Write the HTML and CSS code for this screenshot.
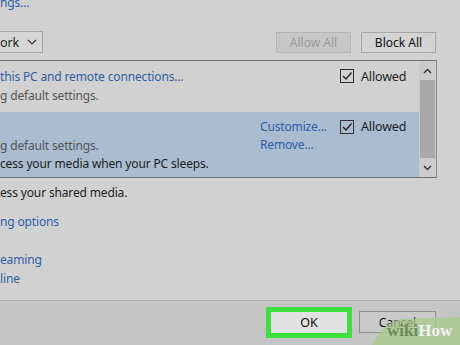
FILE: index.html
```html
<!DOCTYPE html>
<html lang="en">
<head>
    <meta charset="UTF-8">
    <title>Media streaming options</title>
    <link rel="stylesheet" href="styles.css">
</head>
<body>
    <div class="dialog">
        <a class="link top-link" href="#">ngs...</a>

        <div class="toolbar">
            <div class="dropdown">
                <span>ork</span>
                <svg class="chev" width="10" height="6" viewBox="0 0 10 6"><path d="M1 1 L5 5 L9 1" fill="none" stroke="#333" stroke-width="1.2"/></svg>
            </div>
            <div class="tool-buttons">
                <button class="btn disabled">Allow All</button>
                <button class="btn">Block All</button>
            </div>
        </div>

        <!-- device list -->
        <div class="list">
            <div class="rows">
                <div class="row">
                    <div class="col-name">
                        <a class="link" href="#">this PC and remote connections...</a>
                        <div class="muted">g default settings.</div>
                    </div>
                    <div class="col-links"></div>
                    <label class="col-check">
                        <svg class="check" width="14" height="14" viewBox="0 0 14 14"><rect x="0.5" y="0.5" width="13" height="13" fill="none" stroke="#333"/><path d="M3 7 L6 10 L11.5 3.5" fill="none" stroke="#222" stroke-width="1.3"/></svg>
                        Allowed
                    </label>
                </div>
                <div class="row selected">
                    <div class="col-name">
                        <div>&nbsp;</div>
                        <div class="muted">g default settings.</div>
                        <div>cess your media when your PC sleeps.</div>
                    </div>
                    <div class="col-links">
                        <a class="link" href="#">Customize...</a>
                        <a class="link" href="#">Remove...</a>
                    </div>
                    <label class="col-check">
                        <svg class="check" width="14" height="14" viewBox="0 0 14 14"><rect x="0.5" y="0.5" width="13" height="13" fill="none" stroke="#333"/><path d="M3 7 L6 10 L11.5 3.5" fill="none" stroke="#222" stroke-width="1.3"/></svg>
                        Allowed
                    </label>
                </div>
            </div>
            <div class="scrollbar">
                <svg class="arrow" width="9" height="6" viewBox="0 0 9 6"><path d="M1 5 L4.5 1.5 L8 5" fill="none" stroke="#333" stroke-width="1.4"/></svg>
                <div class="thumb"></div>
                <svg class="arrow" width="9" height="6" viewBox="0 0 9 6"><path d="M1 1 L4.5 4.5 L8 1" fill="none" stroke="#333" stroke-width="1.4"/></svg>
            </div>
        </div>

        <div class="text-line shared">ess your shared media.</div>
        <a class="link text-line options" href="#">ng options</a>
        <a class="link text-line streaming" href="#">eaming</a>
        <a class="link text-line" href="#">line</a>

        <div class="footer">
            <button class="btn ok">OK</button>
            <button class="btn cancel">Cancel</button>
        </div>
    </div>

    <div class="watermark">
        <svg width="90" height="42" viewBox="0 0 90 42"><path d="M0 42 C8 30 14 18 30 16 L90 14 L90 42 Z" fill="#a7c98a" opacity="0.75"/></svg>
        <span class="wm-text"><span class="wm-wiki">wiki</span>How</span>
    </div>
</body>
</html>
```

FILE: styles.css
```css
* {
    margin: 0;
    padding: 0;
    box-sizing: border-box;
}

body {
    width: 460px;
    height: 345px;
    overflow: hidden;
    background: #d1d1d1;
    font-family: "Noto Sans", "Open Sans", sans-serif;
    font-size: 12px;
    letter-spacing: -0.15px;
    color: #1e1e1e;
    position: relative;
}

.dialog {
    display: flex;
    flex-direction: column;
    height: 345px;
}

.link {
    color: #2f5ea6;
    text-decoration: none;
    display: block;
    line-height: 19px;
}

.top-link {
    margin-top: -7px;
}

.toolbar {
    display: flex;
    justify-content: space-between;
    align-items: center;
    margin-top: 19px;
    padding-right: 24px;
    height: 22px;
}

.dropdown {
    display: flex;
    align-items: center;
    justify-content: space-between;
    width: 44px;
    height: 22px;
    padding-right: 5px;
    margin-left: -1px;
    background: #d6d6d6;
    border: 1px solid #a6a6a6;
    font-size: 12.5px;
}

.tool-buttons {
    display: flex;
    gap: 10px;
}

.btn {
    font-family: "Noto Sans", "Open Sans", sans-serif;
    font-size: 12px;
    height: 21px;
    width: 75px;
    background: #d3d3d3;
    border: 1px solid #a7a7a7;
    color: #111;
}

.btn.disabled {
    background: #c6c6c6;
    border-color: #b6b6b6;
    color: #9c9c9c;
}

.list {
    display: flex;
    width: 437px;
    height: 118px;
    margin-top: 7px;
    border-top: 1px solid #6f6f6f;
    border-bottom: 1px solid #6f6f6f;
    border-right: 1px solid #8a8a8a;
}

.rows {
    width: 419px;
}

.row {
    display: grid;
    grid-template-columns: 260px 80px 79px;
    height: 51px;
    padding-top: 6px;
    line-height: 19px;
}

.row.selected {
    height: 65px;
    padding-top: 6px;
    background: #a9bcd0;
    line-height: 18.5px;
}

.row.selected .link {
    line-height: 18px;
}

.muted {
    color: #555;
}

.col-check {
    display: flex;
    align-items: flex-start;
    gap: 7px;
    font-size: 12.5px;
}

.check {
    margin-top: 2px;
    flex: none;
}

.scrollbar {
    display: flex;
    flex-direction: column;
    align-items: center;
    width: 17px;
    background: #cbcbcb;
}

.arrow {
    margin: 7px 0 6px;
}

.thumb {
    width: 15px;
    flex: 1;
    background: #a9a9a9;
}

.text-line {
    line-height: 19px;
}

.shared {
    margin-top: 5px;
}

.options {
    margin-top: 10px;
}

.streaming {
    margin-top: 19px;
}

.footer {
    margin-top: auto;
    height: 45px;
    display: flex;
    justify-content: flex-end;
    align-items: center;
    gap: 7px;
    padding-right: 24px;
    padding-bottom: 2px;
    background: #c5c5c5;
    border-top: 1px solid #b0b0b0;
}

.btn.ok {
    width: 86px;
    height: 31px;
    background: #e2e2e2;
    border: 5px solid #3ee03c;
    font-size: 12.5px;
}

.btn.cancel {
    width: 77px;
    height: 22px;
    background: #cacaca;
    border-color: #8f8f8f;
}

.watermark {
    position: absolute;
    left: 372px;
    top: 303px;
    width: 88px;
    height: 42px;
}

.watermark svg {
    display: block;
}

.wm-text {
    position: absolute;
    left: 15px;
    top: 18px;
    font-family: "Liberation Serif", serif;
    font-weight: bold;
    font-size: 17px;
    letter-spacing: 0;
    color: #f2f2f2;
}

.wm-wiki {
    color: #6f8a5e;
}
```
